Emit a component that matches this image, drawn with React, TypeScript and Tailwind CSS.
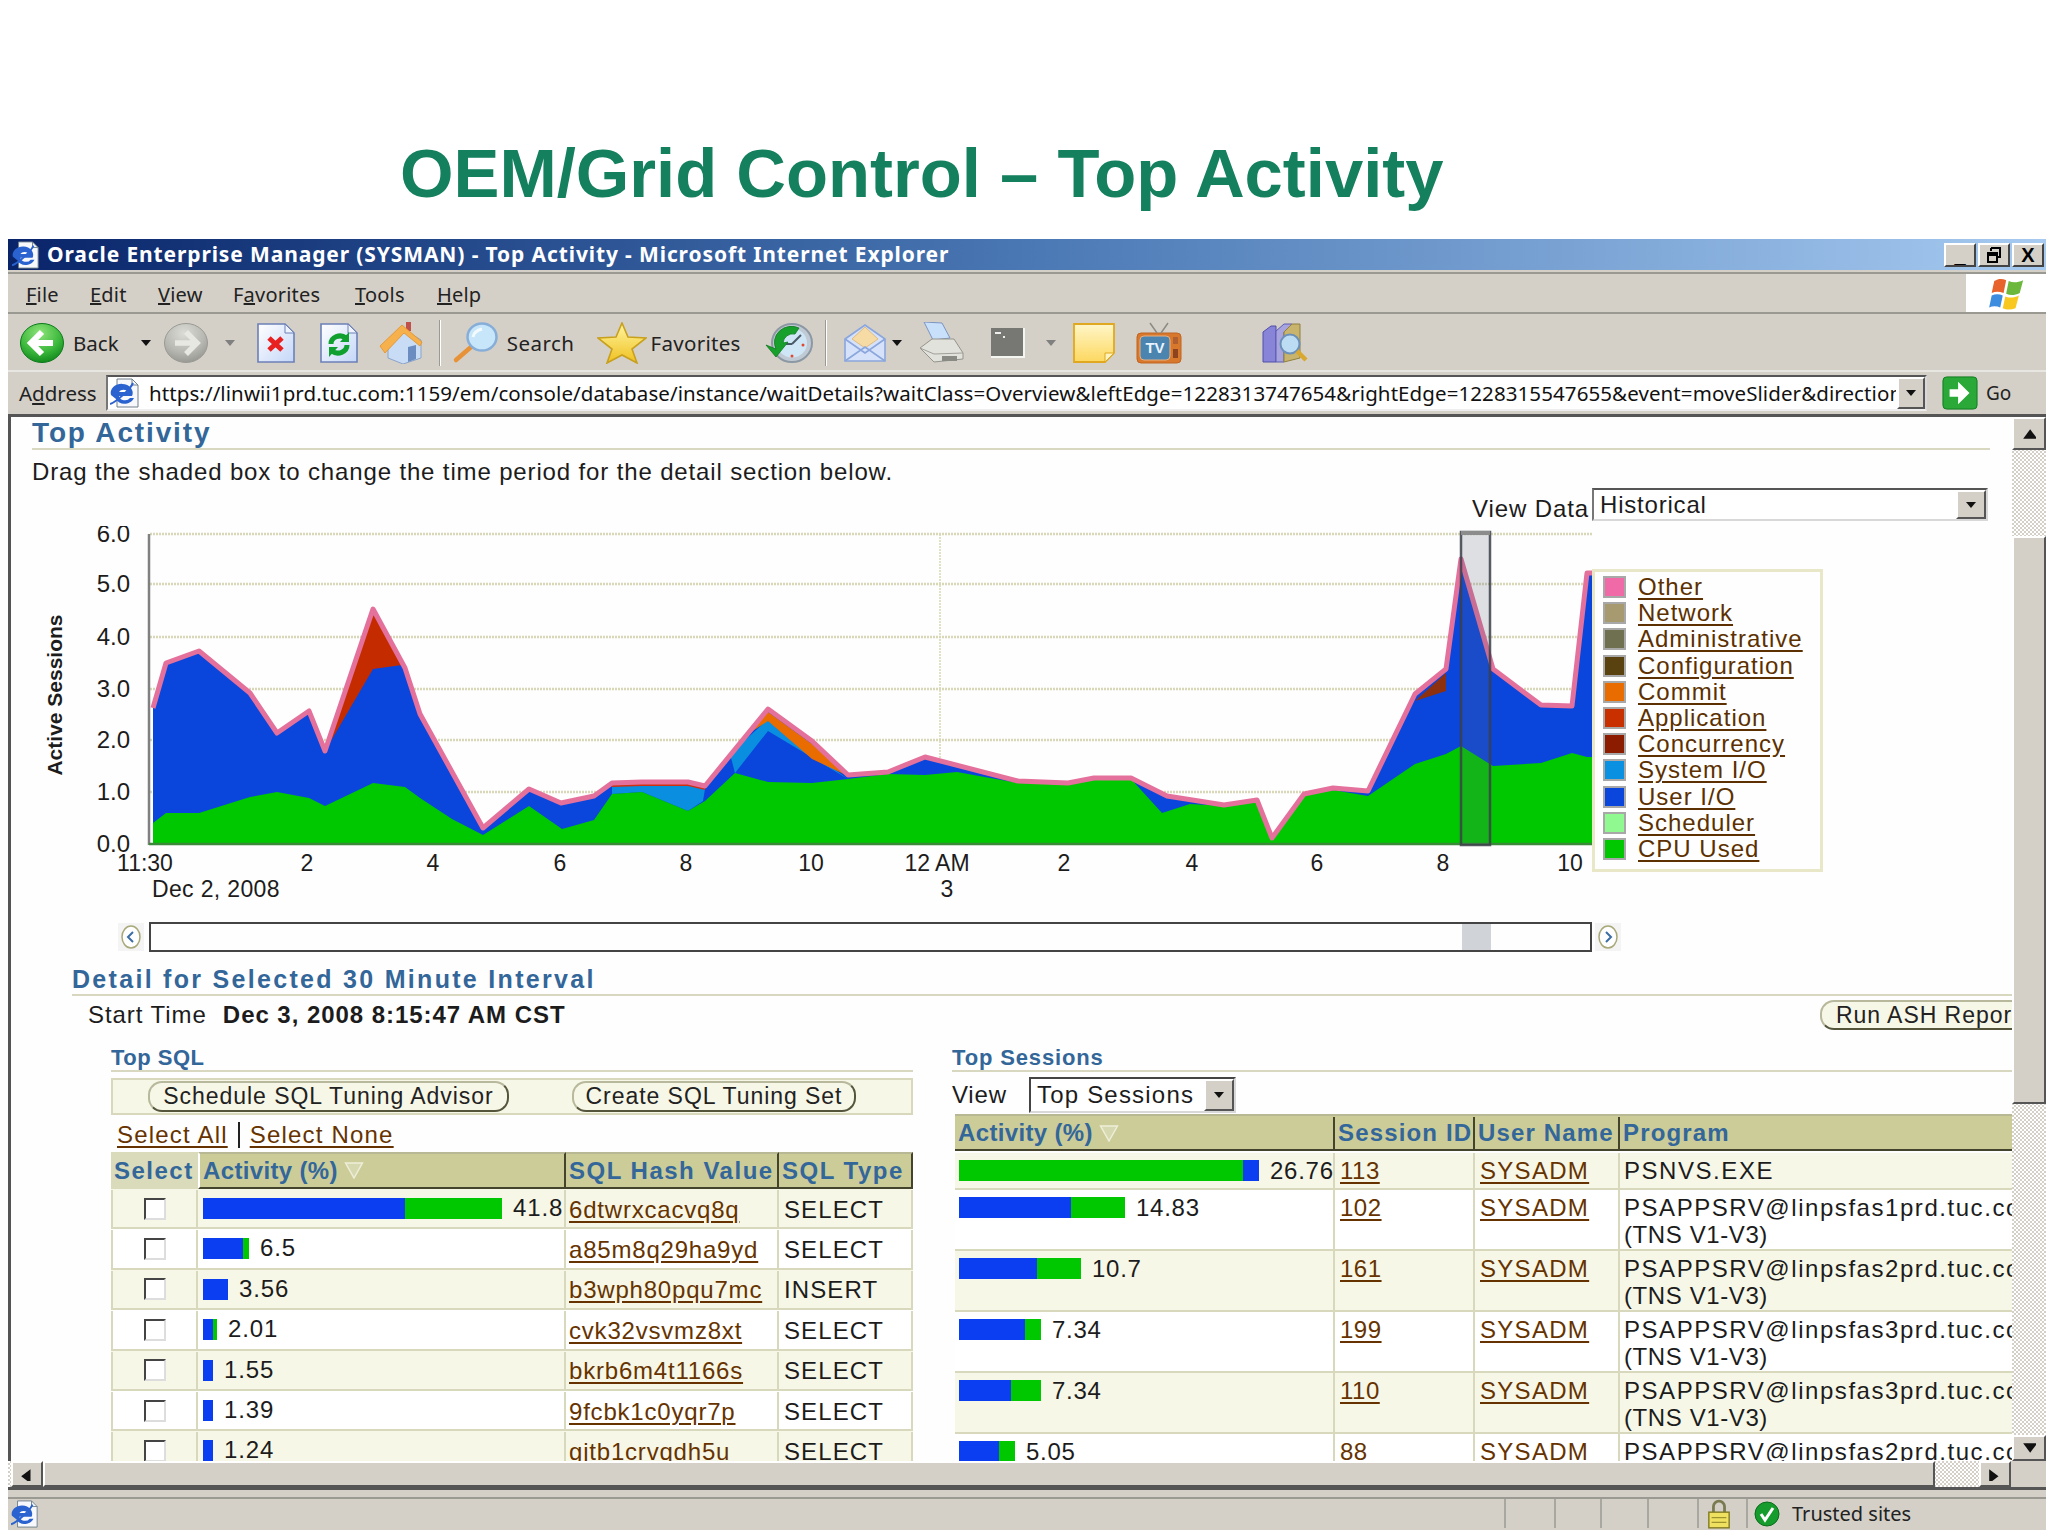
import type { ReactNode } from "react"

const topLine = "153,707 166,662 199,650 250,692 277,732 309,710 325,750 373,608 405,667 420,713 483,827 529,788 561,802 594,795 612,782 642,781 688,781 705,785 768,708 812,740 848,774 888,771 925,756 1018,780 1068,782 1094,777 1131,777 1167,795 1224,804 1257,799 1272,837 1304,793 1333,787 1368,790 1415,693 1446,668 1461,558 1493,668 1541,704 1572,705 1587,572 1592,572"
const greenLine = "153,822 166,812 199,812 250,796 277,791 309,797 325,805 373,782 405,786 420,797 452,818 483,834 529,805 562,828 594,819 612,793 642,791 688,810 705,800 735,772 768,781 812,782 848,778 888,773 925,774 957,771 1018,782 1068,783 1094,778 1131,778 1162,812 1190,803 1224,805 1257,800 1272,838 1304,795 1333,789 1368,795 1415,763 1446,753 1461,745 1493,765 1541,762 1572,752 1587,756 1592,756"

const legend = [
  ["Other", "#f06aa8"],
  ["Network", "#a89a70"],
  ["Administrative", "#6e7050"],
  ["Configuration", "#5a4210"],
  ["Commit", "#e86c00"],
  ["Application", "#c83000"],
  ["Concurrency", "#8c1c00"],
  ["System I/O", "#0a90e0"],
  ["User I/O", "#0a45dc"],
  ["Scheduler", "#90fa90"],
  ["CPU Used", "#00c800"],
]

const sqlRows = [
  { blue: 202, green: 97, value: "41.8", hash: "6dtwrxcacvq8q", type: "SELECT" },
  { blue: 40, green: 6, value: "6.5", hash: "a85m8q29ha9yd", type: "SELECT" },
  { blue: 25, green: 0, value: "3.56", hash: "b3wph80pqu7mc", type: "INSERT" },
  { blue: 10, green: 4, value: "2.01", hash: "cvk32vsvmz8xt", type: "SELECT" },
  { blue: 10, green: 0, value: "1.55", hash: "bkrb6m4t1166s", type: "SELECT" },
  { blue: 10, green: 0, value: "1.39", hash: "9fcbk1c0yqr7p", type: "SELECT" },
  { blue: 10, green: 0, value: "1.24", hash: "gjtb1crvqdh5u", type: "SELECT" },
]

const sessionRows = [
  { blue: 0, green: 284, tail: 16, value: "26.76", id: "113", program: "PSNVS.EXE", tall: false },
  { blue: 112, green: 54, tail: 0, value: "14.83", id: "102", program: "PSAPPSRV@linpsfas1prd.tuc.com", tall: true },
  { blue: 78, green: 44, tail: 0, value: "10.7", id: "161", program: "PSAPPSRV@linpsfas2prd.tuc.com", tall: true },
  { blue: 66, green: 16, tail: 0, value: "7.34", id: "199", program: "PSAPPSRV@linpsfas3prd.tuc.com", tall: true },
  { blue: 52, green: 30, tail: 0, value: "7.34", id: "110", program: "PSAPPSRV@linpsfas3prd.tuc.com", tall: true },
  { blue: 40, green: 16, tail: 0, value: "5.05", id: "88", program: "PSAPPSRV@linpsfas2prd.tuc.com", tall: true },
]

function BackIcon({ grey }: { grey?: boolean }) {
  const id = grey ? "gf" : "gb"
  return (
    <svg viewBox="0 0 44 40" className="h-[40px] w-[44px] shrink-0">
      <defs>
        <radialGradient id={id} cx="45%" cy="25%" r="80%">
          <stop offset="0%" stopColor={grey ? "#dcdcd6" : "#8fe47a"} />
          <stop offset="60%" stopColor={grey ? "#b8b8b2" : "#3cb83c"} />
          <stop offset="100%" stopColor={grey ? "#94948e" : "#0c8418"} />
        </radialGradient>
      </defs>
      <ellipse cx="22" cy="20" rx="21.5" ry="19.5" fill={`url(#${id})`} stroke={grey ? "#9a9a94" : "#0d7a1c"} />
      {grey ? (
        <path d="M22 9l11 11-11 11M32 20H11" fill="none" stroke="#e8e8e2" strokeWidth="5.5" />
      ) : (
        <path d="M22 9L11 20l11 11M12 20h21" fill="none" stroke="#fff" strokeWidth="6" />
      )}
    </svg>
  )
}

function PageIcon({ id, children }: { id: string; children: ReactNode }) {
  return (
    <svg viewBox="0 0 38 40" className="h-[40px] w-[38px] shrink-0">
      <defs>
        <linearGradient id={id} x1="0" y1="0" x2="1" y2="1">
          <stop offset="0%" stopColor="#ffffff" />
          <stop offset="100%" stopColor="#c4d6f8" />
        </linearGradient>
      </defs>
      <path d="M1 1h27l9 9v29H1z" fill={`url(#${id})`} stroke="#6c80b8" strokeWidth="1.6" />
      <path d="M28 1v9h9z" fill="#eef3fd" stroke="#6c80b8" />
      {children}
    </svg>
  )
}

function HomeIcon() {
  return (
    <svg viewBox="0 0 46 42" className="h-[42px] w-[46px] shrink-0">
      <rect x="27" y="0" width="5" height="9" fill="#c0504a" />
      <path d="M9 20v16l15 6 18-6V18L26 8z" fill="#c8dcf6" stroke="#8ca4c8" />
      <path d="M29 25l8-2v14l-8 3z" fill="#6a8cc0" />
      <path d="M1 24L23 3l20 17-2 4L25 11 6 31z" fill="#f6b04c" stroke="#e0922c" strokeWidth="0.8" />
    </svg>
  )
}

function SearchIcon() {
  return (
    <svg viewBox="0 0 48 42" className="h-[42px] w-[48px] shrink-0">
      <path d="M19 25L4 38" stroke="#e89238" strokeWidth="4.5" strokeLinecap="round" />
      <ellipse cx="30" cy="15" rx="14.5" ry="13.5" fill="#c8e6fa" stroke="#86aed8" strokeWidth="2.5" />
      <path d="M21 15c1-5 4-7 9-8" stroke="#f4fbff" strokeWidth="3" fill="none" />
    </svg>
  )
}

function StarIcon() {
  return (
    <svg viewBox="0 0 50 42" className="h-[42px] w-[50px] shrink-0">
      <defs>
        <linearGradient id="st" x1="0" y1="0" x2="0" y2="1">
          <stop offset="0%" stopColor="#fff6a0" />
          <stop offset="100%" stopColor="#f0c020" />
        </linearGradient>
      </defs>
      <path d="M25 1l6 14 18 1-14 11 5 14-15-8-15 8 5-14L1 16l18-1z" fill="url(#st)" stroke="#c8a01c" strokeWidth="1.6" />
    </svg>
  )
}

function MediaIcon() {
  return (
    <svg viewBox="0 0 48 40" className="h-[40px] w-[48px] shrink-0">
      <ellipse cx="27" cy="20" rx="20" ry="19" fill="#c0cad4" stroke="#8c98a4" strokeWidth="2" />
      <ellipse cx="27" cy="20" rx="15" ry="14.5" fill="#cfe6f6" />
      <path d="M27 21l9-9M27 21h-6" stroke="#4a5a68" strokeWidth="2" />
      <circle cx="38" cy="22" r="1.5" fill="#e04830" />
      <circle cx="27" cy="33" r="1.5" fill="#e04830" />
      <path d="M11 26A17 16 0 0 1 34 5l-4 6a10 10 0 0 0-12 9l5-1-12 15L1 22z" fill="#18a02c" stroke="#0e7a1e" strokeWidth="0.8" />
    </svg>
  )
}

function MailIcon() {
  return (
    <svg viewBox="0 0 44 40" className="h-[40px] w-[44px] shrink-0">
      <path d="M2 16L22 2l20 14v22H2z" fill="#d6e2fa" stroke="#8aa6dc" strokeWidth="1.6" />
      <path d="M9 16L22 4l13 12-13 9z" fill="#f6dca4" stroke="#e0bc80" />
      <path d="M2 38l20-14 20 14M2 16l20 14 20-14" fill="none" stroke="#8aa6dc" strokeWidth="1.6" />
    </svg>
  )
}

function PrintIcon() {
  return (
    <svg viewBox="0 0 46 42" className="h-[42px] w-[46px] shrink-0">
      <path d="M5 0l18 1 8 15-17 2z" fill="#c8e0fa" stroke="#7c94c0" />
      <path d="M1 26l12-9h22l9 14v6l-29 3z" fill="#e2e2dc" stroke="#94948c" />
      <path d="M1 26l14 6 29-1" fill="none" stroke="#a0a098" />
      <path d="M23 34h15v5H23z" fill="#8a8a84" />
    </svg>
  )
}

function SquareIcon() {
  return (
    <svg viewBox="0 0 34 30" className="h-[30px] w-[34px] shrink-0">
      <rect width="34" height="30" fill="#f4f4f0" />
      <rect width="32" height="28" fill="#777773" />
      <rect x="4" y="4" width="6" height="2" fill="#eee" />
      <rect x="12" y="8" width="2" height="2" fill="#eee" />
    </svg>
  )
}

function NoteIcon() {
  return (
    <svg viewBox="0 0 42 40" className="h-[40px] w-[42px] shrink-0">
      <defs>
        <linearGradient id="nt" x1="0" y1="0" x2="0" y2="1">
          <stop offset="0%" stopColor="#fff6c8" />
          <stop offset="100%" stopColor="#fdd860" />
        </linearGradient>
      </defs>
      <path d="M1 1h40v29L32 39H1z" fill="url(#nt)" stroke="#e0a820" strokeWidth="1.8" />
      <path d="M41 30h-9v9z" fill="#fff4c0" stroke="#e0a820" />
    </svg>
  )
}

function TvIcon() {
  return (
    <svg viewBox="0 0 46 42" className="h-[42px] w-[46px] shrink-0">
      <rect x="1" y="11" width="44" height="30" rx="4" fill="#d8782c" stroke="#c06420" />
      <rect x="4" y="14" width="30" height="24" rx="4" fill="#4c84b0" stroke="#e8b080" />
      <rect x="37" y="15" width="5" height="7" fill="#b06030" />
      <rect x="37" y="27" width="5" height="9" fill="#8c4420" />
      <text x="19" y="31" fontSize="15" fontWeight="700" fill="#e8f4ff" textAnchor="middle" fontFamily="Liberation Sans">TV</text>
      <path d="M14 1l7 10M32 1l-7 10" stroke="#8c8c84" strokeWidth="1.5" />
    </svg>
  )
}

function BooksIcon() {
  return (
    <svg viewBox="0 0 46 40" className="h-[40px] w-[46px] shrink-0">
      <path d="M1 9l8-6h5v36H1z" fill="#8884d8" stroke="#5050a8" />
      <path d="M14 8l8-7h8l-8 8v30h-8z" fill="#a8a4e0" stroke="#5c5cb0" />
      <path d="M22 9l8-8h8v34l-16 4z" fill="#c8b46c" stroke="#90803c" />
      <circle cx="28" cy="21" r="9.5" fill="#bcdcf4" stroke="#6c90b8" strokeWidth="2" />
      <path d="M35 28l9 9" stroke="#d8a830" strokeWidth="4.5" />
    </svg>
  )
}

function FlagIcon() {
  return (
    <svg viewBox="0 0 42 40" className="h-[34px] w-[38px]">
      <path d="M6 6c5-3 9-3 14-1l-3 15c-5-2-10-2-14 0z" fill="#e8622c" />
      <path d="M23 6c5 2 10 2 17-1l-4 15c-6 3-11 3-16 1z" fill="#6cb83c" />
      <path d="M3 23c4-2 9-2 13 0l-3 14c-4-2-9-2-13 0z" fill="#3c8ce0" />
      <path d="M19 24c5 2 10 2 16-1l-4 15c-5 2-11 2-15 0z" fill="#f8c820" />
    </svg>
  )
}

function IeIcon({ size }: { size: string }) {
  return (
    <svg viewBox="0 0 30 30" className={size}>
      <path d="M7 1h15l6 6v22H7z" fill="#f6f8fc" stroke="#70808c" />
      <path d="M22 1v6h6" fill="none" stroke="#70808c" />
      <path d="M1 17a11 9 0 1 1 21 1H9a6 5 0 0 0 11 2h4c-3 7-15 8-18 1" fill="#2a62d0" />
      <path d="M9 14h9a5 4 0 0 0-9 0z" fill="#fff" />
      <path d="M0 26C6 24 20 12 23 5" fill="none" stroke="#2a62d0" strokeWidth="2" />
    </svg>
  )
}

function Caret({ grey }: { grey?: boolean }) {
  return (
    <svg viewBox="0 0 10 6" className="h-[6px] w-[10px] shrink-0">
      <path d="M0 0h10L5 6z" fill={grey ? "#808080" : "#111"} />
    </svg>
  )
}

function DropButton({ className }: { className: string }) {
  return (
    <div className={`flex shrink-0 items-center justify-center border-2 border-t-white border-l-white border-r-[#555] border-b-[#555] bg-[#d4d0c8] ${className}`}>
      <Caret />
    </div>
  )
}

function ScrollButton({ dir, className }: { dir: "up" | "down" | "left" | "right"; className: string }) {
  const d = { up: "M0 8L6 0l6 8z", down: "M0 0h12L6 8z", left: "M8 0v12L0 6z", right: "M0 0v12l8-6z" }[dir]
  return (
    <div className={`flex shrink-0 items-center justify-center border-2 border-t-white border-l-white border-r-[#555] border-b-[#555] bg-[#d4d0c8] ${className}`}>
      <svg viewBox="0 0 12 12" className="h-[14px] w-[14px]">
        <path d={d} transform="translate(1 2)" fill="#111" />
      </svg>
    </div>
  )
}

function OvalButton({ children, className }: { children: ReactNode; className: string }) {
  return (
    <div className={`flex items-center justify-center whitespace-nowrap rounded-[14px] border-2 border-[#b8b89c] border-r-[#55553c] border-b-[#55553c] bg-[#f7f7e7] text-[23px] tracking-[0.95px] text-[#222] ${className}`}>
      {children}
    </div>
  )
}

function SliderArrow({ dir }: { dir: string }) {
  return (
    <svg viewBox="0 0 26 28" className="h-[28px] w-[26px] shrink-0 bg-[#f4f4f4]">
      <ellipse cx="13" cy="14" rx="9" ry="11" fill="#fff" stroke="#a8a878" strokeWidth="1.5" />
      <path d={dir} fill="none" stroke="#3a6ea5" strokeWidth="2" />
    </svg>
  )
}

function SortMark() {
  return (
    <svg viewBox="0 0 20 18" className="ml-[6px] h-[17px] w-[20px]">
      <path d="M1 1h18L10 17z" fill="#d6d8b0" stroke="#eeeed8" strokeWidth="1.5" />
    </svg>
  )
}

function Bar({ blue, green, tail = 0 }: { blue: number; green: number; tail?: number }) {
  return (
    <div className="flex h-[21px] shrink-0">
      {blue > 0 && <div className="bg-[#0a3ef0]" style={{ width: blue }} />}
      <div className="bg-[#00c800]" style={{ width: green }} />
      {tail > 0 && <div className="bg-[#0a3ef0]" style={{ width: tail }} />}
    </div>
  )
}

function Link({ children }: { children: ReactNode }) {
  return <span className="text-[#663300] underline underline-offset-[3px]">{children}</span>
}

function Chart() {
  const ys = [
    [533, "6.0"],
    [583, "5.0"],
    [636, "4.0"],
    [688, "3.0"],
    [739, "2.0"],
    [791, "1.0"],
  ] as const
  const xLabels = [
    [145, "11:30"],
    [307, "2"],
    [433, "4"],
    [560, "6"],
    [686, "8"],
    [811, "10"],
    [937, "12 AM"],
    [1064, "2"],
    [1192, "4"],
    [1317, "6"],
    [1443, "8"],
    [1570, "10"],
  ] as const
  return (
    <svg viewBox="11 525 1581 380" className="h-[380px] w-[1581px] shrink-0">
      {ys.map(([y]) => (
        <line key={y} x1="150" x2="1592" y1={y} y2={y} stroke="#d8d8b8" strokeWidth="2.5" strokeDasharray="2 1" />
      ))}
      <line x1="940" x2="940" y1="533" y2="760" stroke="#d8d8b0" strokeWidth="1.5" strokeDasharray="2 1" />
      <polygon points={`${topLine} 1592,843 153,843`} fill="#0a45dc" />
      <polygon points="325,750 373,612 402,664 373,668" fill="#c42c00" />
      <polygon points="612,785 642,784 688,784 705,788 703,800 688,810 642,791 612,793" fill="#0a8ee0" />
      <polygon points="612,782 642,781 688,781 705,785 705,789 688,785 642,785 612,786" fill="#d03010" />
      <polygon points="730,753 768,718 812,752 848,778 768,730 735,772" fill="#0a8ee0" />
      <polygon points="745,735 768,711 812,743 848,775 812,758 768,720" fill="#e86c00" />
      <polygon points="1415,700 1446,672 1446,690" fill="#8c3010" />
      <polygon points={`${greenLine} 1592,843 153,843`} fill="#00c800" />
      <polyline points={topLine} fill="none" stroke="#e4709c" strokeWidth="5" strokeLinejoin="round" />
      <line x1="149" x2="149" y1="533" y2="844" stroke="#808080" strokeWidth="2.5" />
      <line x1="149" x2="1592" y1="843" y2="843" stroke="#3a8a3a" strokeWidth="2.5" />
      <path d="M1461 531h29v313h-29z" fill="#5a6478" fillOpacity="0.2" stroke="#3c4048" strokeOpacity="0.85" strokeWidth="2.5" />
      <rect x="1461" y="530" width="29" height="4" fill="#8c8c8c" />
      <g fontFamily="Liberation Sans" fontSize="23" fill="#1c1c1c">
        {ys.map(([y, t]) => (
          <text key={t} x="130" y={y + 8} textAnchor="end" fontSize="24">{t}</text>
        ))}
        <text x="130" y="851" textAnchor="end" fontSize="24">0.0</text>
        {xLabels.map(([x, t], i) => (
          <text key={i} x={x} y="870" textAnchor="middle">{t}</text>
        ))}
        <text x="152" y="896" letterSpacing="0.35">Dec 2, 2008</text>
        <text x="947" y="896" textAnchor="middle">3</text>
        <text transform="translate(62 694) rotate(-90)" textAnchor="middle" fontWeight="700" fontSize="21">Active Sessions</text>
      </g>
    </svg>
  )
}

const cellBorder = "border-r-2 border-b-2 border-[#d8d8bc]"
const hatch = "bg-[repeating-conic-gradient(#d4d0c8_0%_25%,#ffffff_0%_50%)] bg-[length:4px_4px]"

export default function App() {
  return (
    <div className="flex h-[1536px] w-[2048px] flex-col overflow-hidden bg-white font-['Liberation_Sans',sans-serif]">
      <div className="h-[239px] shrink-0 pl-[400px] pt-[131px] text-[68.8px] font-bold leading-[86px] text-[#14805e]">
        OEM/Grid Control – Top Activity
      </div>

      {/* browser window */}
      <div className="ml-[8px] flex h-[1291px] w-[2038px] flex-col bg-[#d4d0c8] font-['Noto_Sans',sans-serif] text-[21px] text-[#222]">
        <div className="flex h-[31px] shrink-0 items-center bg-gradient-to-r from-[#0a246a] via-[#4a78b4] to-[#a6caf0] pl-[4px] pr-[2px]">
          <IeIcon size="h-[28px] w-[28px] shrink-0" />
          <span className="ml-[7px] whitespace-nowrap text-[21px] font-bold tracking-[0.88px] text-white">
            Oracle Enterprise Manager (SYSMAN) - Top Activity - Microsoft Internet Explorer
          </span>
          <div className="ml-auto flex gap-[2px]">
            {["_", "restore", "X"].map((t) => (
              <div key={t} className="flex h-[24px] w-[32px] items-center justify-center border-2 border-t-white border-l-white border-r-[#444] border-b-[#444] bg-[#d4d0c8] font-['Liberation_Sans'] text-[20px] font-bold leading-none text-black">
                {t === "restore" ? (
                  <svg viewBox="0 0 16 16" className="h-[16px] w-[16px]">
                    <path d="M5 1h9v9h-3M5 1v3M2 6h9v9H2zM2 6v2h9" fill="none" stroke="#000" strokeWidth="2" />
                  </svg>
                ) : t}
              </div>
            ))}
          </div>
        </div>

        {/* menu bar */}
        <div className="mt-[2px] flex h-[42px] shrink-0 border-y-2 border-t-[#9a9a92] border-b-[#9a9a92]">
          <div className="flex flex-1 items-center pl-[18px] pt-[3px] text-[20px] tracking-[0.2px]">
            <span className="w-[64px]"><u>F</u>ile</span>
            <span className="w-[68px]"><u>E</u>dit</span>
            <span className="w-[75px]"><u>V</u>iew</span>
            <span className="w-[122px]">F<u>a</u>vorites</span>
            <span className="w-[82px]"><u>T</u>ools</span>
            <span><u>H</u>elp</span>
          </div>
          <div className="flex w-[80px] items-center justify-center border-l-2 border-white bg-white">
            <FlagIcon />
          </div>
        </div>

        {/* toolbar */}
        <div className="flex h-[58px] shrink-0 items-center border-b-2 border-[#e8e6e0] pl-[12px] pt-[2px] text-[20.5px]">
          <BackIcon />
          <span className="ml-[9px]">Back</span>
          <div className="ml-[22px]"><Caret /></div>
          <div className="ml-[13px]"><BackIcon grey /></div>
          <div className="ml-[17px]"><Caret grey /></div>
          <div className="ml-[22px]">
            <PageIcon id="p1">
              <path d="M12 15l13 12M25 15L12 27" stroke="#e82020" strokeWidth="5" />
            </PageIcon>
          </div>
          <div className="ml-[25px]">
            <PageIcon id="p2">
              <path d="M11 21a9 8 0 0 1 15-6M27 22a9 8 0 0 1-15 6" fill="none" stroke="#10a030" strokeWidth="5" />
              <path d="M29 9v10h-9zM9 34V24h9z" fill="#10a030" />
            </PageIcon>
          </div>
          <div className="ml-[21px]"><HomeIcon /></div>
          <div className="ml-[14px] h-[46px] w-[2px] border-l border-r border-l-[#9a9a92] border-r-white" />
          <div className="ml-[11px]"><SearchIcon /></div>
          <span className="ml-[7px] tracking-[0.5px]">Search</span>
          <div className="ml-[22px]"><StarIcon /></div>
          <span className="ml-[4px] tracking-[0.3px]">Favorites</span>
          <div className="ml-[24px]"><MediaIcon /></div>
          <div className="ml-[12px] h-[46px] w-[2px] border-l border-r border-l-[#9a9a92] border-r-white" />
          <div className="ml-[16px]"><MailIcon /></div>
          <div className="ml-[5px]"><Caret /></div>
          <div className="ml-[17px]"><PrintIcon /></div>
          <div className="ml-[26px]"><SquareIcon /></div>
          <div className="ml-[21px]"><Caret grey /></div>
          <div className="ml-[17px]"><NoteIcon /></div>
          <div className="ml-[21px]"><TvIcon /></div>
          <div className="ml-[80px]"><BooksIcon /></div>
        </div>

        {/* address bar */}
        <div className="flex h-[42px] shrink-0 items-center pl-[11px]">
          <span className="w-[87px] text-[20.5px]">A<u>d</u>dress</span>
          <div className="flex h-[36px] w-[1821px] items-center border-2 border-t-[#555] border-l-[#777] border-r-[#d8d8d8] border-b-[#eee] bg-white pl-[2px]">
            <IeIcon size="h-[30px] w-[30px] shrink-0" />
            <div className="ml-[9px] w-[1747px] overflow-hidden whitespace-nowrap text-[20.5px] tracking-[0.09px] text-[#111]">
              https://linwii1prd.tuc.com:1159/em/console/database/instance/waitDetails?waitClass=Overview&amp;leftEdge=1228313747654&amp;rightEdge=1228315547655&amp;event=moveSlider&amp;direction
            </div>
            <DropButton className="ml-auto h-[32px] w-[28px]" />
          </div>
          <svg viewBox="0 0 38 36" className="ml-[15px] h-[36px] w-[36px] shrink-0">
            <rect x="1" y="1" width="36" height="34" rx="4" fill="#2aa838" stroke="#0d7a1c" />
            <path d="M17 6l12 12-12 12v-8H8v-8h9z" fill="#fff" />
          </svg>
          <span className="ml-[8px] text-[19px]">Go</span>
        </div>

        {/* page area */}
        <div className="flex h-[1047px] shrink-0 border-t-[3px] border-l-[3px] border-[#555] bg-[#fefefe]">
          <div className="h-full w-[2001px] shrink-0 overflow-hidden font-['Liberation_Sans',sans-serif] text-[24px] text-[#1c1c1c]">
            <div className="ml-[21px] mr-[22px] flex h-[33px] items-center whitespace-nowrap border-b-2 border-[#d8d8c0] text-[28px] font-bold leading-none tracking-[1.85px] text-[#336699]">
              Top Activity
            </div>
            <div className="ml-[21px] flex h-[38px] items-center whitespace-nowrap pt-[5px] tracking-[0.86px]">
              Drag the shaded box to change the time period for the detail section below.
            </div>
            <div className="mr-[24px] flex h-[33px] items-end justify-end">
              <span className="mr-[3px] whitespace-nowrap leading-[24px] tracking-[0.9px]">View Data</span>
              <div className="flex h-[33px] w-[396px] items-center border-2 border-t-[#555] border-l-[#777] border-r-[#d8d8d8] border-b-[#d8d8d8] bg-white pl-[6px] tracking-[0.8px]">
                Historical
                <DropButton className="ml-auto h-[29px] w-[30px]" />
              </div>
            </div>

            <div className="mt-[5px] flex h-[380px]">
              <Chart />
              <div className="mt-[43px] flex h-[303px] w-[231px] flex-col border-[3px] border-[#e8e8c8] bg-[#fefefe] pl-[8px] pt-[2px] tracking-[1px]">
                {legend.map(([name, color]) => (
                  <div key={name} className="flex h-[26.2px] items-center whitespace-nowrap">
                    <span className="h-[22px] w-[23px] shrink-0 border-2 border-[#a8a8a8]" style={{ backgroundColor: color }} />
                    <span className="ml-[12px] text-[#5c3000] underline underline-offset-[3px]">{name}</span>
                  </div>
                ))}
              </div>
            </div>

            {/* slider */}
            <div className="mt-[16px] flex h-[30px] items-center pl-[107px]">
              <SliderArrow dir="M15 9l-5 5 5 5" />
              <div className="ml-[5px] h-[30px] w-[1443px] shrink-0 border-2 border-[#444] pl-[1311px]">
                <div className="h-full w-[29px] bg-[#d0d4d8]" />
              </div>
              <div className="ml-[3px]"><SliderArrow dir="M11 9l5 5-5 5" /></div>
            </div>

            <div className="ml-[61px] mt-[12px] flex h-[32px] items-center whitespace-nowrap border-b-2 border-[#d8d8c0] text-[25px] font-bold leading-none tracking-[2.3px] text-[#336699]">
              Detail for Selected 30 Minute Interval
            </div>
            <div className="flex h-[36px] items-center pl-[77px] pt-[2px]">
              <span className="whitespace-nowrap tracking-[0.95px]">Start Time</span>
              <span className="ml-[16px] whitespace-nowrap font-bold tracking-[0.95px]">Dec 3, 2008 8:15:47 AM CST</span>
              <div className="ml-auto w-[192px] shrink-0 overflow-hidden">
                <OvalButton className="h-[30px] w-[240px] justify-start pl-[14px]">Run ASH Report</OvalButton>
              </div>
            </div>

            <div className="flex pl-[100px]">
              {/* top sql */}
              <div className="w-[802px] shrink-0">
                <div className="flex h-[40px] items-end border-b-2 border-[#d8d8c0] text-[22px] font-bold leading-[24px] tracking-[0.5px] text-[#336699]">Top SQL</div>
                <div className="mt-[6px] flex h-[37px] items-center border-2 border-[#d8d8bc] bg-[#f7f7e7]">
                  <OvalButton className="ml-[35px] h-[31px] w-[361px]">Schedule SQL Tuning Advisor</OvalButton>
                  <OvalButton className="ml-[63px] h-[31px] w-[284px]">Create SQL Tuning Set</OvalButton>
                </div>
                <div className="flex h-[37px] items-center pl-[6px] pt-[2px] tracking-[1.2px]">
                  <Link>Select All</Link>
                  <span className="mx-[10px] h-[26px] border-l-2 border-[#222]" />
                  <Link>Select None</Link>
                </div>
                <div className="flex h-[37px] items-stretch bg-[#cccc99] font-bold tracking-[1.5px] text-[#336699]">
                  <div className="flex w-[87px] items-center overflow-hidden bg-[#d9dbbb] pl-[3px]">Select</div>
                  <div className="flex w-[368px] items-center border-2 border-l-white border-t-[#b8b894] border-r-[#44442c] border-b-[#44442c] pl-[3px] tracking-[0.35px]">
                    Activity (%)
                    <SortMark />
                  </div>
                  <div className="flex w-[213px] items-center whitespace-nowrap border-y-2 border-r-2 border-t-[#b8b894] border-r-[#44442c] border-b-[#44442c] pl-[3px]">SQL Hash Value</div>
                  <div className="flex w-[134px] items-center whitespace-nowrap border-y-2 border-r-2 border-t-[#b8b894] border-r-[#44442c] border-b-[#44442c] pl-[3px]">SQL Type</div>
                </div>
                {sqlRows.map((r, i) => (
                  <div key={r.hash} className={`flex h-[40.4px] pt-[1px] ${i % 2 === 0 ? "bg-[#f7f7e7]" : "bg-white"}`}>
                    <div className={`flex w-[87px] items-center justify-center border-l-2 ${cellBorder}`}>
                      <span className="h-[22px] w-[22px] border-2 border-t-[#444] border-l-[#444] border-r-[#ddd] border-b-[#ddd] bg-white" />
                    </div>
                    <div className={`flex w-[368px] items-start pl-[5px] pt-[8px] ${cellBorder}`}>
                      <Bar blue={r.blue} green={r.green} />
                      <span className="-mt-[2px] ml-[11px] leading-[24px] tracking-[0.9px]">{r.value}</span>
                    </div>
                    <div className={`flex w-[213px] items-center pl-[3px] pt-[2px] tracking-[0.8px] ${cellBorder}`}>
                      <Link>{r.hash}</Link>
                    </div>
                    <div className={`flex w-[134px] items-center pl-[5px] pt-[2px] tracking-[1.1px] ${cellBorder}`}>{r.type}</div>
                  </div>
                ))}
              </div>

              {/* top sessions */}
              <div className="ml-[39px] w-[1061px] shrink-0">
                <div className="flex h-[40px] items-end border-b-2 border-[#d8d8c0] text-[22px] font-bold leading-[24px] tracking-[0.85px] text-[#336699]">Top Sessions</div>
                <div className="flex h-[42px] items-center pt-[4px]">
                  <span className="w-[77px] tracking-[0.8px]">View</span>
                  <div className="flex h-[36px] w-[207px] items-center border-2 border-t-[#444] border-l-[#444] border-r-[#d8d8d8] border-b-[#d8d8d8] bg-white pl-[6px] tracking-[1.2px]">
                    Top Sessions
                    <DropButton className="ml-auto h-[32px] w-[30px]" />
                  </div>
                </div>
                <div className="ml-[3px] flex h-[37px] items-stretch border-y-2 border-t-[#b8b894] border-b-[#44442c] bg-[#cccc99] pt-[1px] font-bold tracking-[1.15px] text-[#336699]">
                  <div className="flex w-[380px] items-center border-r-2 border-[#44442c] pl-[3px] tracking-[0.35px]">
                    Activity (%)
                    <SortMark />
                  </div>
                  <div className="flex w-[140px] items-center whitespace-nowrap border-r-2 border-[#44442c] pl-[3px]">Session ID</div>
                  <div className="flex w-[145px] items-center whitespace-nowrap border-r-2 border-[#44442c] pl-[3px]">User Name</div>
                  <div className="flex items-center pl-[3px]">Program</div>
                </div>
                {sessionRows.map((r, i) => (
                  <div key={r.id} className={`ml-[3px] flex leading-[27px] ${r.tall ? "h-[61px]" : "mt-[2px] h-[37px]"} ${i % 2 === 0 ? "bg-[#f7f7e7]" : "bg-white"}`}>
                    <div className={`flex w-[380px] items-start pl-[4px] pt-[7px] ${cellBorder}`}>
                      <Bar blue={r.blue} green={r.green} tail={r.tail} />
                      <span className="-mt-[3px] ml-[11px] tracking-[0.75px]">{r.value}</span>
                    </div>
                    <div className={`w-[140px] pl-[5px] pt-[4px] tracking-[0.5px] ${cellBorder}`}>
                      <Link>{r.id}</Link>
                    </div>
                    <div className={`w-[145px] pl-[5px] pt-[4px] tracking-[1.3px] ${cellBorder}`}>
                      <Link>SYSADM</Link>
                    </div>
                    <div className="flex-1 overflow-hidden whitespace-nowrap border-b-2 border-[#d8d8bc] pl-[4px] pt-[4px] tracking-[1.55px]">
                      {r.program}
                      {r.tall && <div className="tracking-[0.6px]">(TNS V1-V3)</div>}
                    </div>
                  </div>
                ))}
              </div>
            </div>
          </div>

          {/* vertical scrollbar */}
          <div className={`flex h-full flex-1 flex-col ${hatch}`}>
            <ScrollButton dir="up" className="h-[33px] w-full" />
            <div className="mt-[86px] h-[568px] w-full border-2 border-t-white border-l-white border-r-[#555] border-b-[#555] bg-[#d4d0c8]" />
            <div className="flex-1" />
            <ScrollButton dir="down" className="h-[26px] w-full" />
          </div>
        </div>

        {/* horizontal scrollbar */}
        <div className={`flex h-[29px] shrink-0 border-b-[3px] border-[#555] ${hatch}`}>
          <ScrollButton dir="left" className="ml-[3px] h-full w-[32px]" />
          <div className="h-full w-[1892px] border-2 border-t-white border-l-white border-r-[#555] border-b-[#555] bg-[#d4d0c8]" />
          <div className="w-[44px]" />
          <ScrollButton dir="right" className="h-full w-[32px]" />
          <div className="flex-1 bg-[#d4d0c8]" />
        </div>

        {/* status bar */}
        <div className="mt-[7px] flex h-[31px] shrink-0 items-center border-t-2 border-[#9a9a92] text-[20px]">
          <div className="ml-[3px]"><IeIcon size="h-[28px] w-[28px]" /></div>
          <div className="ml-[1465px] h-full w-[50px] border-l-2 border-[#a8a8a0]" />
          <div className="h-full w-[46px] border-l-2 border-[#a8a8a0]" />
          <div className="h-full w-[47px] border-l-2 border-[#a8a8a0]" />
          <div className="h-full w-[50px] border-l-2 border-[#a8a8a0]" />
          <div className="flex h-full w-[49px] items-center border-l-2 border-[#a8a8a0] pl-[8px]">
            <svg viewBox="0 0 26 32" className="h-[30px] w-[24px]">
              <path d="M7 14V8a6 6 0 0 1 12 0v6" fill="none" stroke="#7a7a50" strokeWidth="3" />
              <rect x="2" y="14" width="22" height="17" fill="#f0e060" stroke="#807820" strokeWidth="1.5" />
              <path d="M5 20h16M5 25h16" stroke="#807820" />
            </svg>
          </div>
          <div className="flex h-full flex-1 items-center border-l-2 border-[#a8a8a0] pl-[6px]">
            <svg viewBox="0 0 26 26" className="h-[26px] w-[26px] shrink-0">
              <circle cx="13" cy="13" r="12" fill="#169c2c" stroke="#0c6a1c" />
              <path d="M7 13l4 6 8-12" fill="none" stroke="#fff" strokeWidth="3" />
            </svg>
            <span className="ml-[12px] whitespace-nowrap">Trusted sites</span>
          </div>
        </div>
      </div>
    </div>
  )
}
